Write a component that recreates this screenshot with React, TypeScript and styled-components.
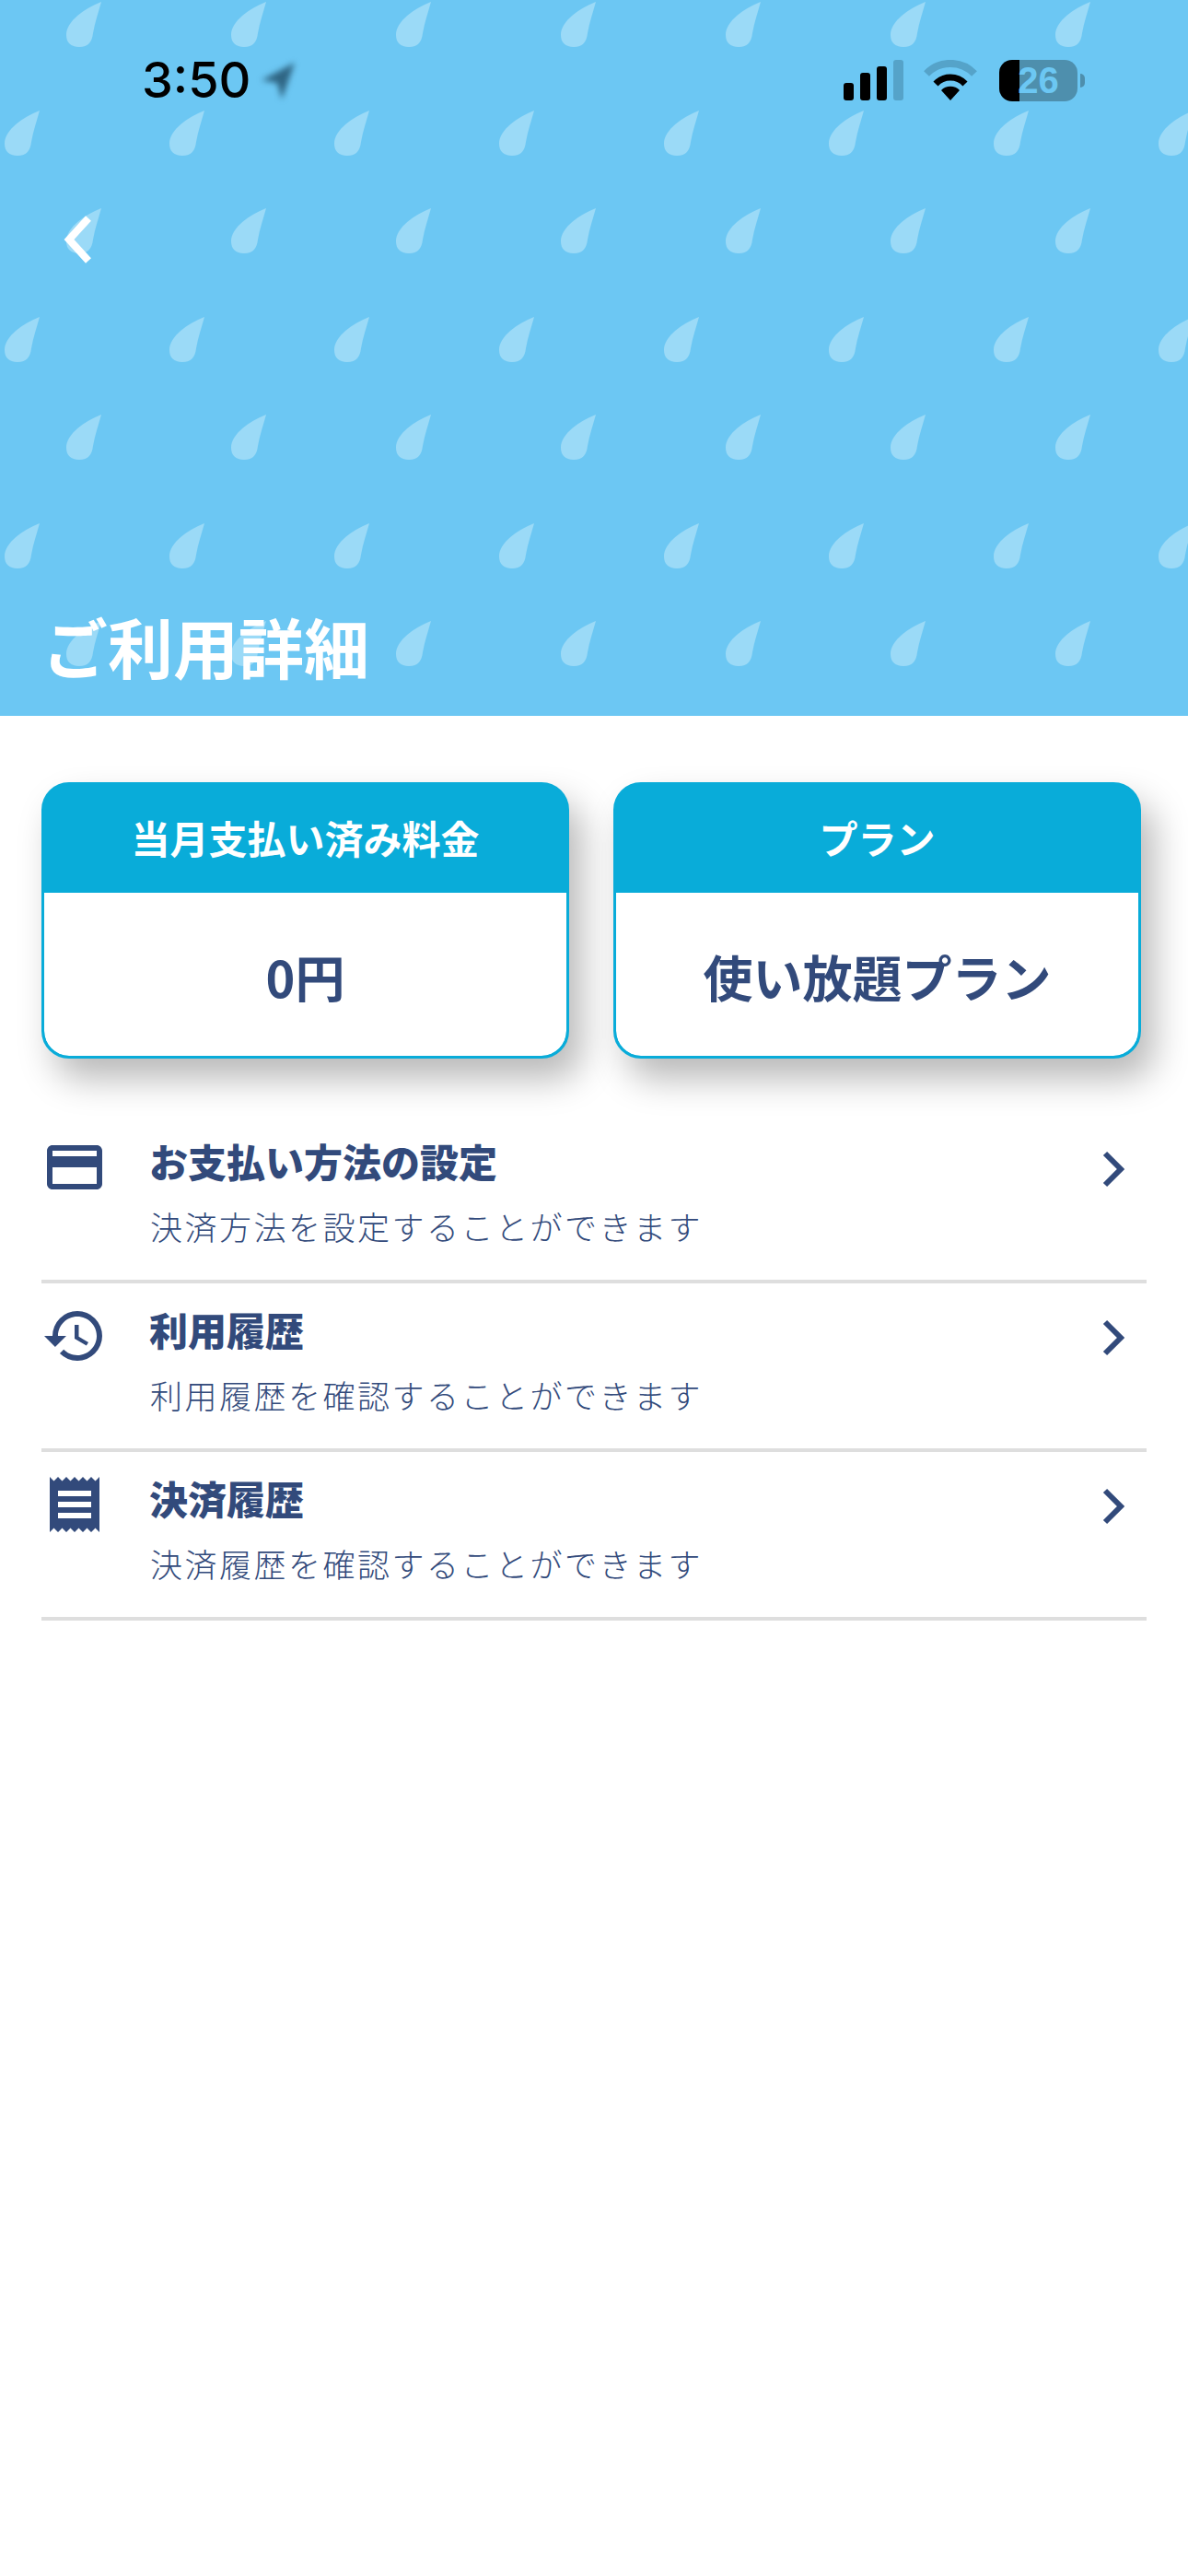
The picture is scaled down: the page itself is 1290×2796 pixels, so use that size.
import React from 'react';
import styled, { createGlobalStyle } from 'styled-components';
import { MdCreditCard, MdHistory, MdReceipt } from 'react-icons/md';

const NAVY = '#324a7b';
const TEAL = '#09acd9';

const dropTile = encodeURIComponent(
  `<svg xmlns="http://www.w3.org/2000/svg" width="179" height="224"><g fill="#9bdaf7">` +
    `<path d="M110 2C107 13 103 24 101 36C100 45 96 51 86 51C77 51 72 46 72 38C72 23 92 9 110 2Z"/>` +
    `<path d="M43 120C40 131 36 142 34 154C33 163 29 169 19 169C10 169 5 164 5 156C5 141 25 127 43 120Z"/>` +
    `</g></svg>`
);

const GlobalStyle = createGlobalStyle`
  html, body {
    margin: 0;
    padding: 0;
    background: #fff;
  }
  body {
    font-family: "Noto Sans CJK JP", "Noto Sans", sans-serif;
  }
`;

const Page = styled.div`
  width: 1290px;
  min-height: 2796px;
  background: #fff;
`;

const Hero = styled.header`
  height: 777px;
  box-sizing: border-box;
  display: flex;
  flex-direction: column;
  background-color: #6cc7f3;
  background-image: url("data:image/svg+xml,${dropTile}");
  background-repeat: repeat;
`;

const StatusBar = styled.div`
  display: flex;
  align-items: center;
  justify-content: space-between;
  height: 46px;
  margin-top: 64px;
  padding: 0 112px 0 154px;
`;

const TimeGroup = styled.div`
  display: flex;
  align-items: center;
  gap: 8px;
`;

const Time = styled.span`
  font-family: "Inter", "Liberation Sans", sans-serif;
  font-size: 54px;
  font-weight: 500;
  line-height: 46px;
  color: #000;
`;

const LocationArrow = styled.svg`
  width: 44px;
  height: 48px;
  filter: blur(3px);
`;

const StatusIcons = styled.div`
  display: flex;
  align-items: center;
  gap: 22px;
`;

const Battery = styled.div`
  position: relative;
  width: 85px;
  height: 45px;
  border-radius: 14px;
  display: flex;
  align-items: center;
  justify-content: center;
  background: linear-gradient(to right, #000 0 22px, #4e8fad 22px);
  font-family: "Liberation Sans", sans-serif;
  font-weight: 700;
  font-size: 40px;
  color: #6cc7f3;
  margin: 0 8px 0 2px;

  &::after {
    content: '';
    position: absolute;
    right: -8px;
    top: 15px;
    width: 5px;
    height: 15px;
    border-radius: 0 5px 5px 0;
    background: #4e8fad;
  }
`;

const BackButton = styled.button`
  align-self: flex-start;
  width: 44px;
  height: 60px;
  margin: 120px 0 0 69px;
  padding: 0;
  background: none;
  border: none;
  display: flex;
  align-items: center;
`;

const HeroTitle = styled.h1`
  margin: auto 0 0;
  padding: 0 0 27px 46px;
  font-size: 71px;
  line-height: 100px;
  font-weight: 700;
  color: #fff;
`;

const Cards = styled.section`
  display: flex;
  justify-content: space-between;
  padding: 72px 51px 0 45px;
`;

const Card = styled.div`
  width: 573px;
  height: 300px;
  box-sizing: border-box;
  display: flex;
  flex-direction: column;
  border: 3px solid ${TEAL};
  border-radius: 30px;
  background: ${TEAL};
  box-shadow: 14px 22px 38px rgba(0, 0, 0, 0.28);
  overflow: hidden;
`;

const CardHead = styled.div`
  height: 117px;
  padding-bottom: 4px;
  box-sizing: border-box;
  flex: none;
  display: flex;
  align-items: center;
  justify-content: center;
  color: #fff;
  font-size: 42px;
  font-weight: 700;
`;

const CardValue = styled.div`
  flex: 1;
  display: flex;
  align-items: center;
  justify-content: center;
  padding-top: 4px;
  border-radius: 0 0 27px 27px;
  background: #fff;
  color: ${NAVY};
  font-size: 54px;
  font-weight: 700;
`;

const MenuList = styled.ul`
  list-style: none;
  margin: 61px 45px 0;
  padding: 0;
`;

const MenuRow = styled.li`
  height: 183px;
  box-sizing: border-box;
  display: flex;
  align-items: flex-start;
  padding-top: 21px;
  border-bottom: 4px solid #dedede;
  color: ${NAVY};
`;

const MenuIcon = styled.span`
  width: 117px;
  flex: none;
  display: flex;
  font-size: 72px;
  line-height: 0;
`;

const MenuText = styled.div`
  flex: 1;
`;

const MenuTitle = styled.div`
  font-size: 42px;
  font-weight: 900;
  line-height: 58px;
`;

const MenuSub = styled.div`
  margin: 16px 0 0 1px;
  font-size: 35px;
  letter-spacing: 2.5px;
  line-height: 52px;
  font-weight: 300;
`;

const Chevron = styled.svg`
  width: 28px;
  height: 44px;
  margin: 16px 22px 0 0;
  flex: none;
`;

const menuItems = [
  { icon: <MdCreditCard />, title: 'お支払い方法の設定', sub: '決済方法を設定することができます' },
  { icon: <MdHistory />, title: '利用履歴', sub: '利用履歴を確認することができます' },
  { icon: <MdReceipt />, title: '決済履歴', sub: '決済履歴を確認することができます' },
];

const App: React.FC = () => {
  return (
    <Page>
      <GlobalStyle />
      <Hero>
        <StatusBar>
          <TimeGroup>
            <Time>3:50</Time>
            <LocationArrow viewBox="0 0 44 48">
              <path d="M40 5 L4 24 L21 27 L26 45 Z" fill="#2f6583" />
            </LocationArrow>
          </TimeGroup>
          <StatusIcons>
            <svg width="65" height="44" viewBox="0 0 65 44">
              <rect x="0" y="25" width="11" height="19" rx="3" fill="#000" />
              <rect x="18" y="14" width="11" height="30" rx="3" fill="#000" />
              <rect x="36" y="7" width="11" height="37" rx="3" fill="#000" />
              <rect x="54" y="0" width="11" height="44" rx="3" fill="#55a3c9" />
            </svg>
            <svg width="58" height="44" viewBox="0 0 58 44">
              <path d="M3 15 A36 36 0 0 1 55 15" fill="none" stroke="#55a3c9" strokeWidth="8" />
              <path d="M13 26 A22 22 0 0 1 45 26" fill="none" stroke="#000" strokeWidth="7" />
              <path d="M29 44 L19 33 A14 14 0 0 1 39 33 Z" fill="#000" />
            </svg>
            <Battery>26</Battery>
          </StatusIcons>
        </StatusBar>
        <BackButton aria-label="戻る">
          <svg width="30" height="52" viewBox="0 0 30 52">
            <path d="M27 3 L6 26 L27 49" fill="none" stroke="#fff" strokeWidth="8" />
          </svg>
        </BackButton>
        <HeroTitle>ご利用詳細</HeroTitle>
      </Hero>

      <Cards>
        <Card>
          <CardHead>当月支払い済み料金</CardHead>
          <CardValue>0円</CardValue>
        </Card>
        <Card>
          <CardHead>プラン</CardHead>
          <CardValue>使い放題プラン</CardValue>
        </Card>
      </Cards>

      <MenuList>
        {menuItems.map((item) => (
          <MenuRow key={item.title}>
            <MenuIcon>{item.icon}</MenuIcon>
            <MenuText>
              <MenuTitle>{item.title}</MenuTitle>
              <MenuSub>{item.sub}</MenuSub>
            </MenuText>
            <Chevron viewBox="0 0 28 44">
              <path d="M5 5 L22 22 L5 39" fill="none" stroke={NAVY} strokeWidth="6" />
            </Chevron>
          </MenuRow>
        ))}
      </MenuList>
    </Page>
  );
};

export default App;
